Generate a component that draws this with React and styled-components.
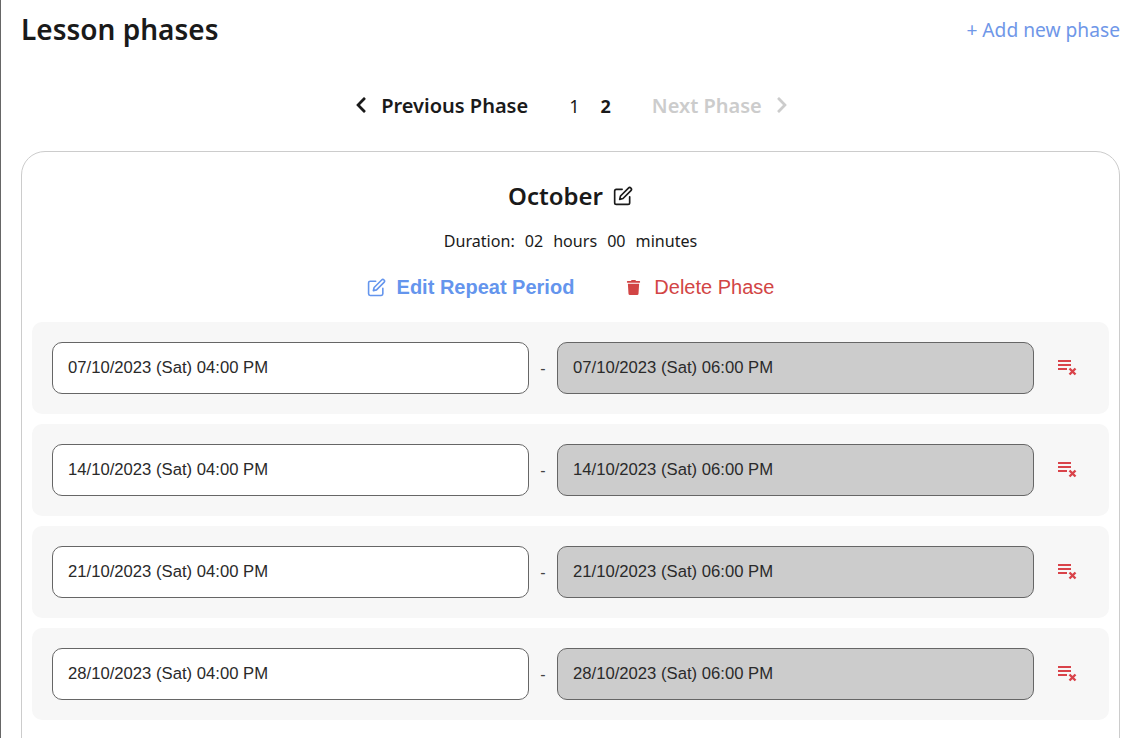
import React from 'react';
import styled, { createGlobalStyle } from 'styled-components';
import { FaChevronLeft, FaChevronRight, FaTrash } from 'react-icons/fa';
import { FiEdit } from 'react-icons/fi';

const GlobalStyle = createGlobalStyle`
  html, body {
    margin: 0;
    height: 738px;
    overflow: hidden;
    background: #fff;
    font-family: 'Noto Sans', 'Open Sans', sans-serif;
    color: #1a1a1a;
  }
`;

const Page = styled.div`
  box-sizing: border-box;
  height: 738px;
  overflow: hidden;
  border-left: 1px solid #666;
  padding: 0 16px 0 20px;
`;

const Header = styled.header`
  display: flex;
  justify-content: space-between;
  align-items: center;
  height: 59px;
`;

const Title = styled.h1`
  margin: 0;
  font-size: 28px;
  font-weight: 600;
  line-height: 59px;
`;

const AddLink = styled.a`
  font-size: 19.2px;
  color: #6f97e8;
`;

const Pager = styled.nav`
  display: flex;
  justify-content: center;
  align-items: center;
  height: 34px;
  margin-top: 29px;
  margin-left: 2px;
  font-size: 20px;
  font-weight: 600;
`;

const PagerStep = styled.span`
  display: flex;
  align-items: center;
  gap: 11px;
  color: ${(p) => (p.$disabled ? '#cccccc' : '#1a1a1a')};
`;

const PageNumbers = styled.div`
  display: flex;
  gap: 21px;
  margin: 2px 41px 0;
  font-size: 18px;
`;

const PageNumber = styled.span`
  font-weight: ${(p) => (p.$active ? 700 : 400)};
`;

const Card = styled.section`
  box-sizing: border-box;
  height: 640px;
  margin-top: 29px;
  padding: 0 10px;
  border: 1px solid #ccc;
  border-radius: 24px;
`;

const PhaseName = styled.h2`
  display: flex;
  justify-content: center;
  align-items: center;
  gap: 10px;
  margin: 0;
  padding-top: 26px;
  height: 36px;
  font-size: 24px;
  font-weight: 600;
  line-height: 36px;
`;

const Duration = styled.p`
  display: flex;
  justify-content: center;
  gap: 10px;
  margin: 15px 0 0;
  font-size: 16.1px;
  line-height: 24px;
`;

const Actions = styled.div`
  display: flex;
  justify-content: center;
  align-items: center;
  gap: 52px;
  margin-top: 21px;
  height: 26px;
  font-family: 'Liberation Sans', Arial, sans-serif;
  font-size: 20px;
`;

const Action = styled.span`
  display: flex;
  align-items: center;
  gap: ${(p) => p.$gap}px;
  color: ${(p) => p.$color};
  font-weight: ${(p) => (p.$bold ? 700 : 400)};
`;

const Rows = styled.div`
  display: flex;
  flex-direction: column;
  gap: 10px;
  margin-top: 22px;
`;

const Row = styled.div`
  display: flex;
  align-items: center;
  height: 92px;
  padding: 0 20px;
  border-radius: 10px;
  background: #f7f7f7;
`;

const DateField = styled.div`
  box-sizing: border-box;
  flex: 1;
  height: 52px;
  padding: 0 15px;
  border: 1px solid #666;
  border-radius: 10px;
  background: ${(p) => (p.$readOnly ? '#cccccc' : '#fff')};
  font-family: 'Liberation Sans', Arial, sans-serif;
  font-size: 16.67px;
  line-height: 49px;
  color: #2a2a2a;
`;

const Dash = styled.span`
  width: 28px;
  margin-top: 2px;
  text-align: center;
  font-family: 'Liberation Sans', Arial, sans-serif;
  font-size: 16px;
  color: #444;
`;

const RemoveButton = styled.button`
  display: flex;
  justify-content: flex-end;
  width: 43px;
  margin-right: 12px;
  padding: 0;
  border: 0;
  background: none;
`;

const ClearIcon = () => (
  <svg width="20" height="18" viewBox="0 1 20 18" fill="none" stroke="#d9434a" strokeWidth="2">
    <path d="M1 3h13M1 7h13M1 11h9" />
    <path d="M12.5 10.5l6 6M18.5 10.5l-6 6" strokeWidth="2.4" />
  </svg>
);

const rows = ['07/10/2023', '14/10/2023', '21/10/2023', '28/10/2023'];

const App = () => (
  <Page>
    <GlobalStyle />
    <Header>
      <Title>Lesson phases</Title>
      <AddLink>+ Add new phase</AddLink>
    </Header>
    <Pager>
      <PagerStep>
        <FaChevronLeft size={18} />
        Previous Phase
      </PagerStep>
      <PageNumbers>
        <PageNumber>1</PageNumber>
        <PageNumber $active>2</PageNumber>
      </PageNumbers>
      <PagerStep $disabled>
        Next Phase
        <FaChevronRight size={18} />
      </PagerStep>
    </Pager>
    <Card>
      <PhaseName>
        October <FiEdit size={20} />
      </PhaseName>
      <Duration>
        <span>Duration:</span>
        <span>02</span>
        <span>hours</span>
        <span>00</span>
        <span>minutes</span>
      </Duration>
      <Actions>
        <Action $color="#6495ed" $gap={11} $bold>
          <FiEdit size={19} />
          Edit Repeat Period
        </Action>
        <Action $color="#d24545" $gap={13}>
          <FaTrash size={15} />
          Delete Phase
        </Action>
      </Actions>
      <Rows>
        {rows.map((date) => (
          <Row key={date}>
            <DateField>{date} (Sat) 04:00 PM</DateField>
            <Dash>-</Dash>
            <DateField $readOnly>{date} (Sat) 06:00 PM</DateField>
            <RemoveButton>
              <ClearIcon />
            </RemoveButton>
          </Row>
        ))}
      </Rows>
    </Card>
  </Page>
);

export default App;
